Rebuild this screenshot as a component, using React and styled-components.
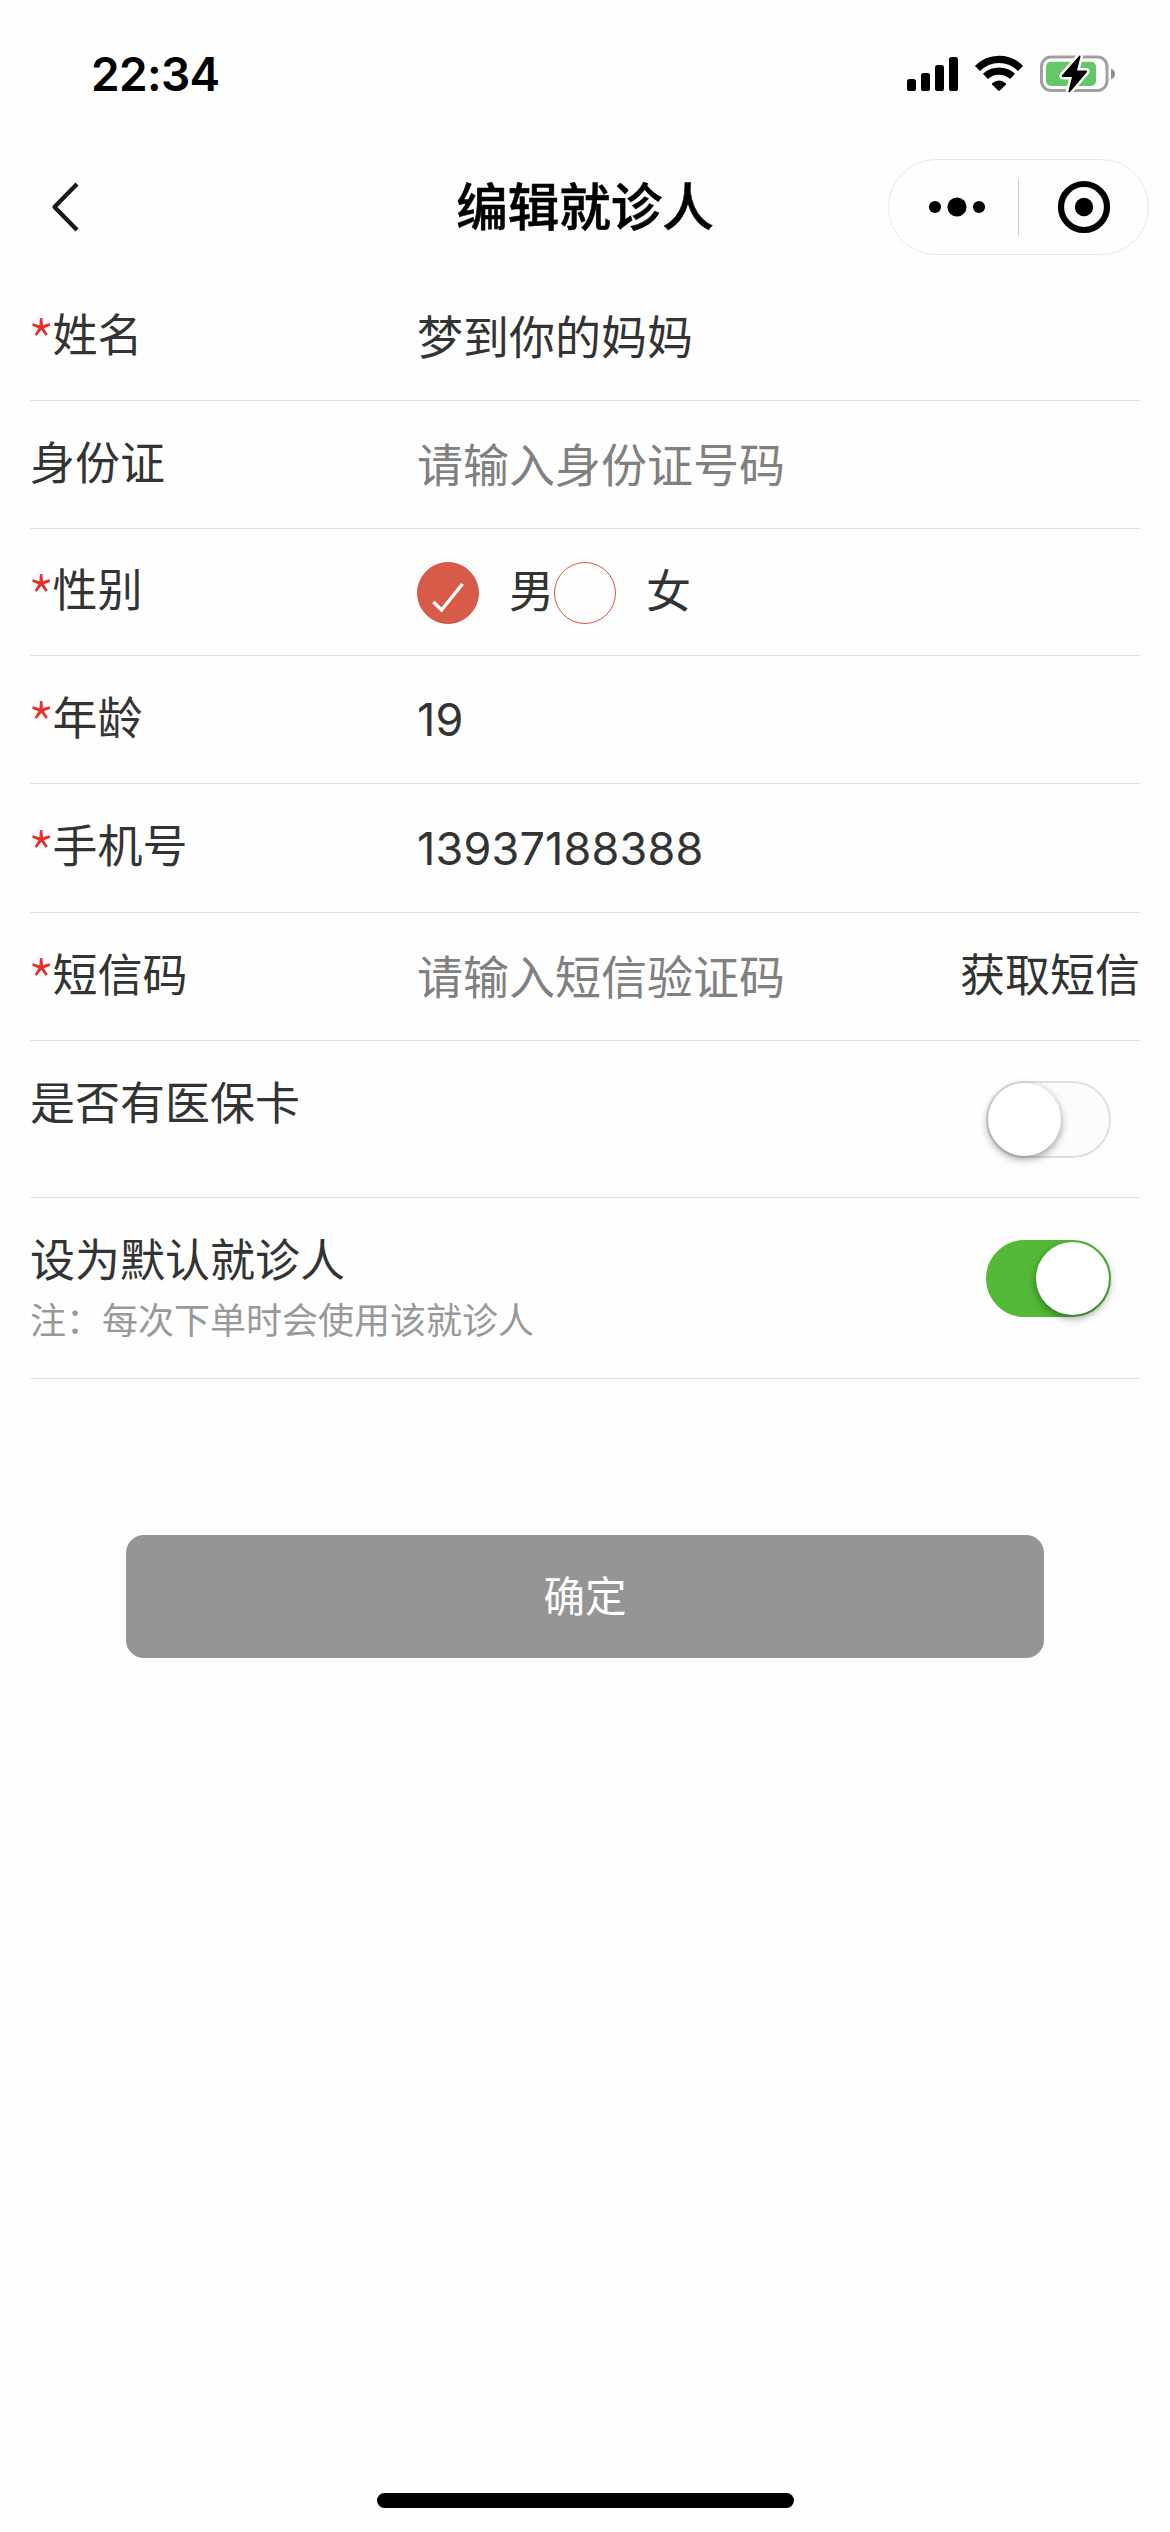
import React, { useState } from "react";
import styled, { createGlobalStyle, css } from "styled-components";

const GlobalStyle = createGlobalStyle`
  *, *::before, *::after { box-sizing: border-box; }
  body { margin: 0; background: #fefefe; }
  button, input { font: inherit; color: inherit; border: 0; padding: 0; margin: 0; background: none; outline: none; }
`;

const Screen = styled.div`
  display: flex;
  flex-direction: column;
  width: 1170px;
  height: 2532px;
  background: #fefefe;
  color: #333;
  font-family: Inter, "Noto Sans CJK SC", sans-serif;
  font-size: 45px;
  line-height: 62px;
`;

const StatusBar = styled.header`
  display: flex;
  justify-content: space-between;
  align-items: center;
  height: 148px;
  padding: 0 54px 0 91px;
`;

const Clock = styled.time`
  color: #000;
  font-size: 46px;
  font-weight: 600;
  letter-spacing: -0.7px;
`;

const NavBar = styled.nav`
  display: grid;
  grid-template-columns: 1fr auto 1fr;
  align-items: center;
  height: 118px;
  padding: 0 21px;
`;

const BackButton = styled.button`
  display: flex;
  justify-self: start;
  margin-left: 27px;
`;

const Title = styled.h1`
  margin: 0;
  color: #000;
  font-size: 51.5px;
  font-weight: 500;
  line-height: 74px;
  -webkit-text-stroke: 0.6px #000;
`;

const Capsule = styled.div`
  display: flex;
  align-items: center;
  justify-self: end;
  width: 261px;
  height: 96px;
  border: 1px solid #e9e9e9;
  border-radius: 48px;
`;

const CapsuleButton = styled.button`
  display: flex;
  flex: none;
  justify-content: center;
  width: 129px;
  padding-left: ${(p) => p.$indent || 0}px;
`;

const CapsuleDivider = styled.span`
  width: 1px;
  height: 57px;
  background: #cfcfcf;
`;

const Form = styled.form`
  display: flex;
  flex-direction: column;
  padding: 7px 30px 0;
`;

const Row = styled.div`
  display: flex;
  align-items: ${(p) => (p.$top ? "flex-start" : "center")};
  height: ${(p) => p.$height || 128}px;
  padding-top: ${(p) => p.$top || 0}px;
  border-bottom: 1px solid #dedede;
`;

const Label = styled.label`
  flex: none;
  width: 387px;
  margin-top: -2px;
`;

const Required = styled.span`
  margin: 0 -2.4px 0 -2.6px;
  color: #e2352b;
  font-family: "Noto Sans CJK SC", sans-serif;
  font-size: 62px;
  font-weight: 300;
  line-height: 0;
  vertical-align: -15.5px;
`;

const Field = styled.input`
  flex: 1;
  min-width: 0;
  height: 68px;
  margin-top: -6px;
  font-family: "Noto Sans CJK SC", sans-serif;
  font-size: 46px;

  &::placeholder { color: #808080; opacity: 1; }

  ${(p) =>
    p.$digits &&
    css`
      margin-top: 0;
      font-family: Inter, sans-serif;
      font-size: 45px;
      letter-spacing: 0.15px;
    `}
`;

const CodeButton = styled.button`
  flex: none;
  margin-top: -2px;
`;

const RadioGroup = styled.div`
  display: flex;
  align-items: center;
  margin-top: 2px;
`;

const RadioOption = styled.button`
  display: flex;
  align-items: center;
  gap: 30px;
`;

const RadioDot = styled.span`
  display: flex;
  align-items: center;
  justify-content: center;
  width: 62px;
  height: 62px;
  border: 1px solid #d55846;
  border-radius: 50%;
  background: ${(p) => (p.$checked ? "#d85a48" : "transparent")};
`;

const RadioText = styled.span`
  margin-top: -3px;
`;

const TextBlock = styled.div`
  display: flex;
  flex: 1;
  flex-direction: column;
  margin-top: ${(p) => p.$offset || 0}px;
`;

const Note = styled.span`
  color: #999;
  font-size: 36px;
  line-height: 58px;
`;

const Toggle = styled.button`
  display: flex;
  flex: none;
  align-items: center;
  justify-content: flex-start;
  width: 125px;
  height: 77px;
  margin-right: 29px;
  border: 2px solid #dfdfdf;
  border-radius: 39px;
  background: #fcfcfc;
  ${(p) =>
    p.$on &&
    css`
      justify-content: flex-end;
      border-color: #54b937;
      background: #54b937;
    `}
`;

const Knob = styled.span`
  width: 73px;
  height: 73px;
  border-radius: 50%;
  background: #fff;
  box-shadow: 0 3px 8px rgba(0, 0, 0, 0.4);
`;

const SubmitButton = styled.button`
  align-self: center;
  width: 918px;
  height: 123px;
  margin-top: 156px;
  border-radius: 18px;
  background: #959595;
  color: #fff;
  font-size: 41.5px;
  line-height: 124px;
`;

const HomeIndicator = styled.div`
  align-self: center;
  width: 417px;
  height: 15px;
  margin-top: auto;
  margin-bottom: 24px;
  border-radius: 8px;
  background: #000;
`;

const StatusIcons = () => (
  <svg width="210" height="42" viewBox="906 53 210 42" fill="none">
    <g fill="#000">
      <rect x="907" y="79" width="9" height="12" rx="2.6" />
      <rect x="921" y="73" width="9" height="18" rx="2.6" />
      <rect x="935" y="65" width="9" height="26" rx="2.6" />
      <rect x="949" y="57" width="9" height="34" rx="2.6" />
      <path d="M992.2 83.2Q999 77.8 1005.8 83.2Q1006.6 84 1005.8 84.8L999.8 90.6Q999 91.3 998.2 90.6L992.2 84.8Q991.4 84 992.2 83.2Z" />
    </g>
    <path d="M977.5 68.5C989.5 56.2 1008.5 56.2 1020.5 68.5" stroke="#000" strokeWidth="7.2" />
    <path d="M985.4 76.4C993 69.3 1005 69.3 1012.6 76.4" stroke="#000" strokeWidth="7.2" />
    <rect x="1041.5" y="57" width="65.5" height="33.5" rx="9.5" stroke="#a19fa1" strokeWidth="3" />
    <rect x="1046" y="61.7" width="50" height="24.3" rx="5" fill="#65c768" />
    <path d="M1111 68.7Q1115 70 1115 74T1111 79.3Z" fill="#8f8d8f" />
    <path d="M1079.5 55.5L1061.8 75.5Q1061.5 77 1063 77H1072L1068.3 91.5Q1069 93 1070 92L1087 72Q1087.5 70.5 1086 70.5H1077L1080.5 56.5Q1080.5 55 1079.5 55.5Z" fill="#000" stroke="#fefefe" strokeWidth="5" strokeLinejoin="round" paintOrder="stroke" />
  </svg>
);

const BackIcon = () => (
  <svg width="32" height="52" viewBox="0 0 32 52" fill="none">
    <path d="M29 3L6.5 26L29 49" stroke="#191919" strokeWidth="4.3" strokeLinejoin="round" />
  </svg>
);

const MoreIcon = () => (
  <svg width="58" height="20" viewBox="0 0 58 20">
    <circle cx="7" cy="10" r="6.1" />
    <circle cx="29" cy="10" r="9.6" />
    <circle cx="51" cy="10" r="6.1" />
  </svg>
);

const CloseIcon = () => (
  <svg width="54" height="54" viewBox="0 0 54 54">
    <circle cx="27" cy="27" r="23" fill="none" stroke="#000" strokeWidth="6.2" />
    <circle cx="27" cy="27" r="9.2" />
  </svg>
);

const CheckIcon = () => (
  <svg width="60" height="60" viewBox="0 0 60 60" fill="none">
    <path d="M15.5 39L23.5 47L44.5 21" stroke="#fff" strokeWidth="3.4" />
  </svg>
);

const TextRow = ({ label, required, value, placeholder, digits, height, children }) => (
  <Row $height={height}>
    <Label>
      {required && <Required>*</Required>}
      {label}
    </Label>
    <Field defaultValue={value} placeholder={placeholder} $digits={digits} />
    {children}
  </Row>
);

const Radio = ({ text, checked, onSelect }) => (
  <RadioOption type="button" onClick={onSelect}>
    <RadioDot $checked={checked}>{checked && <CheckIcon />}</RadioDot>
    <RadioText>{text}</RadioText>
  </RadioOption>
);

const Switch = ({ initial }) => {
  const [on, setOn] = useState(initial);
  return (
    <Toggle type="button" $on={on} onClick={() => setOn(!on)}>
      <Knob />
    </Toggle>
  );
};

export default function App() {
  const [gender, setGender] = useState("男");
  return (
    <>
      <GlobalStyle />
      <Screen>
        <StatusBar>
          <Clock>22:34</Clock>
          <StatusIcons />
        </StatusBar>
        <NavBar>
          <BackButton><BackIcon /></BackButton>
          <Title>编辑就诊人</Title>
          <Capsule>
            <CapsuleButton $indent={7}><MoreIcon /></CapsuleButton>
            <CapsuleDivider />
            <CapsuleButton><CloseIcon /></CapsuleButton>
          </Capsule>
        </NavBar>
        <Form onSubmit={(e) => e.preventDefault()}>
          <TextRow required label="姓名" value="梦到你的妈妈" />
          <TextRow label="身份证" placeholder="请输入身份证号码" />
          <Row $height={127}>
            <Label><Required>*</Required>性别</Label>
            <RadioGroup>
              {["男", "女"].map((g) => (
                <Radio key={g} text={g} checked={gender === g} onSelect={() => setGender(g)} />
              ))}
            </RadioGroup>
          </Row>
          <TextRow required label="年龄" value="19" digits />
          <TextRow required label="手机号" value="13937188388" digits height={129} />
          <TextRow required label="短信码" placeholder="请输入短信验证码">
            <CodeButton type="button">获取短信</CodeButton>
          </TextRow>
          <Row $top={40} $height={157}>
            <TextBlock $offset={-8}>是否有医保卡</TextBlock>
            <Switch initial={false} />
          </Row>
          <Row $top={42} $height={181}>
            <TextBlock $offset={-10}>
              设为默认就诊人
              <Note>注：每次下单时会使用该就诊人</Note>
            </TextBlock>
            <Switch initial />
          </Row>
          <SubmitButton type="submit">确定</SubmitButton>
        </Form>
        <HomeIndicator />
      </Screen>
    </>
  );
}
